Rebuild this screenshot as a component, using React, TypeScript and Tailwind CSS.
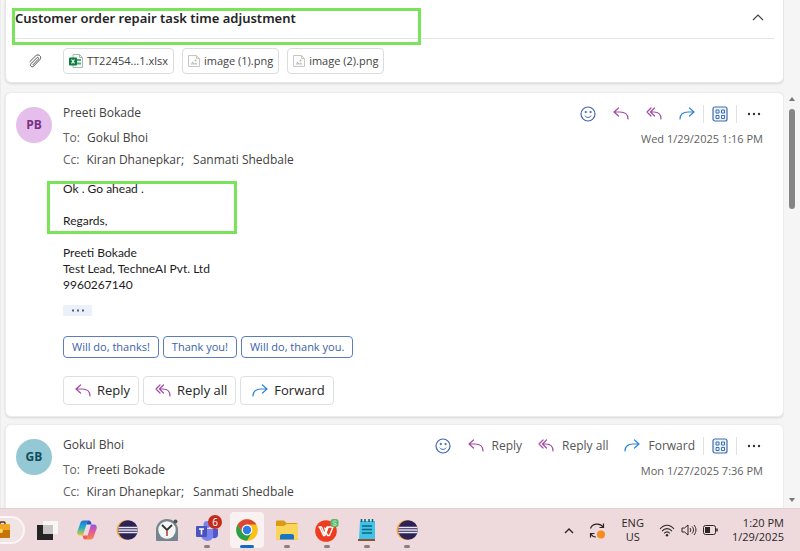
import type { ReactNode } from "react";
import clsx from "clsx";

const suggestions = ["Will do, thanks!", "Thank you!", "Will do, thank you."];

const purple = "#a24ba8";
const blue = "#2f86d6";

function ReplyIcon() {
  return (
    <svg width="16" height="14" viewBox="0 0 16 14" fill="none" stroke={purple} strokeWidth="1.200" strokeLinecap="round" strokeLinejoin="round" aria-hidden="true">
      <path d="M5.500 1 1 5l4.500 4M1.300 5H7c5 0 8 2.500 8 7" />
    </svg>
  );
}

function ReplyAllIcon() {
  return (
    <svg width="16" height="14" viewBox="0 0 16 14" fill="none" stroke={purple} strokeWidth="1.200" strokeLinecap="round" strokeLinejoin="round" aria-hidden="true">
      <path d="M5 1 1 5l4 4M8.500 1l-4 4 4 4M4.800 5H8c4.500 0 7 2.500 7 7" />
    </svg>
  );
}

function ForwardIcon() {
  return (
    <svg width="16" height="14" viewBox="0 0 16 14" fill="none" stroke={blue} strokeWidth="1.200" strokeLinecap="round" strokeLinejoin="round" aria-hidden="true">
      <path d="m10.500 1 4.500 4-4.500 4M14.700 5H9c-5 0-8 2.500-8 7" />
    </svg>
  );
}

function SmileIcon() {
  return (
    <svg width="16" height="16" viewBox="0 0 16 16" fill="none" stroke="#4466ad" strokeLinecap="round" aria-hidden="true">
      <circle cx="8" cy="8" r="7" strokeWidth="1.200" />
      <path d="M5 10c1.500 2 4.500 2 6 0" />
      <circle cx="5.600" cy="6" r=".6" fill="#4466ad" />
      <circle cx="10.400" cy="6" r=".6" fill="#4466ad" />
    </svg>
  );
}

function AppsIcon() {
  return (
    <svg width="16" height="16" viewBox="0 0 16 16" fill="none" stroke="#416fae" aria-hidden="true">
      <rect x="1" y="1" width="14" height="14" rx="2" fill="#edf3fb" strokeWidth="1.200" />
      <path d="M4 4h3v3H4zM9.500 4h3v3h-3zM4 9.500h3v3H4zM9.500 9.500h3v3h-3z" />
    </svg>
  );
}

function MoreIcon() {
  return (
    <svg width="14" height="4" viewBox="0 0 14 4" fill="#333" aria-hidden="true">
      <circle cx="2" cy="2" r="1.200" />
      <circle cx="7" cy="2" r="1.200" />
      <circle cx="12" cy="2" r="1.200" />
    </svg>
  );
}

function ExcelIcon() {
  return (
    <svg width="14" height="14" viewBox="0 0 14 14" aria-hidden="true">
      <path d="M4 .5h6.500l3 3v10H4z" fill="#f4faf6" stroke="#a9b8ae" />
      <path d="M8 5h4v2H8zM8 8.500h4v2H8z" fill="#4fae7b" />
      <path d="M10.500.5v3h3" fill="none" stroke="#a9b8ae" />
      <rect y="3.500" width="8" height="8" rx="1" fill="#107c41" />
      <path d="m2.500 5.500 3 4M5.500 5.500l-3 4" stroke="#fff" strokeWidth="1.200" />
    </svg>
  );
}

function ImageIcon() {
  return (
    <svg width="12" height="12" viewBox="0 0 12 12" fill="none" aria-hidden="true">
      <path d="M.5.5h8l3 3v8H.5z" fill="#fcfcfc" stroke="#c9c6c2" />
      <path d="M8.500.5v3h3" stroke="#c9c6c2" />
      <path d="m2.500 9.500 2-3 2 2 1.500-1 1.500 2z" fill="#b7c9dc" />
      <circle cx="7.500" cy="5.500" r="1" fill="#e9b25c" />
    </svg>
  );
}

const attachments = [
  { name: "TT22454...1.xlsx", icon: <ExcelIcon /> },
  { name: "image (1).png", icon: <ImageIcon /> },
  { name: "image (2).png", icon: <ImageIcon /> },
];

const replyActions = [
  { label: "Reply", icon: <ReplyIcon /> },
  { label: "Reply all", icon: <ReplyAllIcon /> },
  { label: "Forward", icon: <ForwardIcon /> },
];

type MessageProps = {
  from: string;
  to: string;
  initials: string;
  avatar: string;
  date: string;
  labelled?: boolean;
  children?: ReactNode;
};

function Message({ from, to, initials, avatar, date, labelled, children }: MessageProps) {
  return (
    <article className="rounded-md border border-[#ececec] bg-white pt-[9px] pr-5 pb-[11px] pl-[10px] shadow-sm">
      <div className="flex gap-[11px]">
        <div className={clsx("mt-[5px] flex size-9 shrink-0 items-center justify-center rounded-full text-[12px] font-bold", avatar)}>
          {initials}
        </div>
        <div className="min-w-0 flex-1">
          <div className="flex items-start justify-between">
            <div className="text-[12px] leading-[22px] text-[#424242]">
              <p>{from}</p>
              <p className="mt-[3px]">
                <span className="mr-[7px] text-[#616161]">To:</span>
                {to}
              </p>
              <p>
                <span className="mr-[7px] text-[#616161]">Cc:</span>
                Kiran Dhanepkar;<span className="ml-[9px]">Sanmati Shedbale</span>
              </p>
            </div>
            <div className="flex flex-col items-end">
              <div className="flex h-6 items-center">
                <button type="button" aria-label="React" className="mr-[17px]">
                  <SmileIcon />
                </button>
                <div className={clsx("mr-2 flex items-center", labelled ? "gap-4" : "gap-[17px]")}>
                  {replyActions.map((action) => (
                    <button key={action.label} type="button" aria-label={action.label} className="flex items-center gap-2 text-[12px] text-[#555]">
                      {action.icon}
                      {labelled && <span>{action.label}</span>}
                    </button>
                  ))}
                </div>
                <div className="flex h-[18px] items-center border-x border-[#e2e2e2] px-2">
                  <button type="button" aria-label="Apps">
                    <AppsIcon />
                  </button>
                </div>
                <button type="button" aria-label="More actions" className="flex h-4 items-center pr-[2px] pl-[10px]">
                  <MoreIcon />
                </button>
              </div>
              <time className="mt-[3px] text-[11px] leading-5 text-[#616161]">{date}</time>
            </div>
          </div>
          {children}
        </div>
      </div>
    </article>
  );
}

function EclipseLogo() {
  return (
    <svg width="22" height="22" viewBox="0 0 22 22">
      <circle cx="10.500" cy="11" r="10" fill="#f0a33e" />
      <circle cx="12" cy="11" r="9.800" fill="#2c2255" />
      <path d="M2.500 8.500h19M2.300 11h19.400M2.500 13.500h19" stroke="#e8e6f2" strokeWidth="1.300" />
    </svg>
  );
}

const apps: { name: string; icon: ReactNode; open?: boolean; active?: boolean; badge?: string }[] = [
  {
    name: "Task view",
    icon: (
      <svg width="22" height="22" viewBox="0 0 22 22">
        <path d="M1 6h16v15H1z" fill="#252525" />
        <path d="M7 2h15v13H7z" fill="#fbf8f8" opacity=".9" />
        <path d="M7 6h10v9H7z" fill="#c9c6c6" />
      </svg>
    ),
  },
  {
    name: "Copilot",
    icon: (
      <svg width="22" height="22" viewBox="0 0 22 22">
        <defs>
          <linearGradient id="cool" x1="0" y1="0" x2="0" y2="1">
            <stop stopColor="#1d75d8" />
            <stop offset=".5" stopColor="#27b1c2" />
            <stop offset="1" stopColor="#e9c62f" />
          </linearGradient>
          <linearGradient id="warm" x1="0" y1="0" x2="0" y2="1">
            <stop stopColor="#9357db" />
            <stop offset=".5" stopColor="#e65a9c" />
            <stop offset="1" stopColor="#f58a40" />
          </linearGradient>
        </defs>
        <path d="M13 1.500H7.500C5.500 1.500 4.600 3 4 5L1.500 12c-.8 2.500.2 4.500 2.500 4.500h3L10.500 5c.5-2 1-3 2.500-3.500z" fill="url(#cool)" />
        <path d="M9 20.500h5.500c2 0 3-1.500 3.500-3.500l2.500-7c.8-2.500-.2-4.500-2.500-4.500h-3L11.500 17c-.5 2-1 3-2.500 3.500z" fill="url(#warm)" />
        <path d="M12.500 1.500c2 0 2.500 1 3 4h-5c.4-2.500.9-3.500 2-4z" fill="#2753c5" />
        <path d="M9.500 20.500c-2 0-2.500-1.200-2.800-4h5c-.3 2.200-1 3.500-2.200 4z" fill="#f05d58" />
      </svg>
    ),
  },
  { name: "Eclipse", icon: <EclipseLogo /> },
  {
    name: "Clock",
    icon: (
      <svg width="22" height="22" viewBox="0 0 22 22">
        <path d="M0 11v10q0 1 1 1h20q1 0 1-1V11z" fill="#75858d" />
        <circle cx="11" cy="11" r="11" fill="#75858d" />
        <circle cx="19.500" cy="2.500" r="2" fill="#4b555b" />
        <circle cx="11" cy="11" r="8.700" fill="#f4f6f7" />
        <path d="m6 6 5 5 5-5" fill="none" stroke="#333" strokeWidth="1.800" />
        <path d="M11 11v6" stroke="#b5482b" strokeWidth="1.600" />
      </svg>
    ),
  },
  {
    name: "Teams",
    open: true,
    badge: "6",
    icon: (
      <svg width="22" height="22" viewBox="0 0 22 22">
        <circle cx="11" cy="5.500" r="3.500" fill="#7b83eb" />
        <circle cx="18" cy="6" r="2.500" fill="#5059c9" />
        <path d="M14 10h8v6c0 3-4 4.500-7 2z" fill="#5059c9" />
        <path d="M5 10h12v7c0 6-10 7-12 0z" fill="#7b83eb" />
        <rect y="7" width="11" height="11" rx="1" fill="#4b53bc" />
        <path d="M3 10h5M5.500 10v5.500" stroke="#fff" strokeWidth="1.500" />
      </svg>
    ),
  },
  {
    name: "Chrome",
    open: true,
    active: true,
    icon: (
      <svg width="22" height="22" viewBox="0 0 22 22">
        <circle cx="11" cy="11" r="10.800" fill="#fbc116" />
        <path d="M1.650 5.600A10.800 10.800 0 0 1 20.350 5.600H11L6.320 13.700z" fill="#dd4536" />
        <path d="M1.650 5.600A10.800 10.800 0 0 0 11 21.800L15.680 13.700H6.320z" fill="#2aa04a" />
        <circle cx="11" cy="11" r="5.400" fill="#fff" />
        <circle cx="11" cy="11" r="4.200" fill="#2f7de1" />
      </svg>
    ),
  },
  {
    name: "File Explorer",
    open: true,
    icon: (
      <svg width="22" height="22" viewBox="0 0 22 22">
        <path d="M0 3c0-1 .5-1.500 1.500-1.500H8L10.500 4H20c1 0 2 .7 2 2v13c0 1-.7 1.500-1.500 1.500h-19C.5 20.500 0 20 0 19z" fill="#d99a16" />
        <path d="M0 7h8l2.500-2H22v14c0 1-.7 1.500-1.500 1.500h-19C.5 20.500 0 20 0 19z" fill="#fbd45c" />
        <path d="M4 20.500V17c0-1 .7-2 2-2h10c1.300 0 2 1 2 2v3.500z" fill="#1976c5" />
      </svg>
    ),
  },
  {
    name: "WPS Office",
    open: true,
    icon: (
      <svg width="24" height="24" viewBox="0 0 24 24">
        <circle cx="11" cy="13" r="10.800" fill="#ed3c20" />
        <path d="M3.500 9h3l3 7 2.500-7h6l-3.500 8.500h-2L9.500 9.500M4.500 9l4 8.500h1.500L13 9.500" fill="none" stroke="#fff" strokeWidth="1.400" strokeLinejoin="round" />
        <rect x="15.500" y="1" width="8" height="8" rx="2.500" fill="#58b868" />
        <path d="M21.500 3.500c-1.500-1-3.500-.5-3.500.8 0 1.400 3.500.6 3.500 2 0 1-2.200 1.400-3.700.4" fill="none" stroke="#c3ecca" />
      </svg>
    ),
  },
  {
    name: "Notepad",
    open: true,
    icon: (
      <svg width="20" height="22" viewBox="0 0 20 22">
        <path d="M3 2h15v18H2z" fill="#3fc3e6" />
        <path d="M1 20h17v2H1z" fill="#8c5137" />
        <path d="M4.500 0v3M8 0v3M12 0v3M15.500 0v3" stroke="#155a70" strokeWidth="1.500" />
        <path d="M5 7h10M5 10.500h10M5 14h10" stroke="#12667f" strokeWidth="1.500" />
      </svg>
    ),
  },
  { name: "Eclipse workspace", open: true, icon: <EclipseLogo /> },
];

function Taskbar() {
  return (
    <footer className="flex h-[43px] shrink-0 items-center justify-between border-t border-[#e6cfd2] bg-[#eed9dc] pr-4 text-[#2b2728]">
      <nav aria-label="Taskbar" className="flex h-full items-center">
        <button type="button" aria-label="Wallet" className="mr-[2px] flex h-7 w-[25px] items-center rounded-r-full border-2 border-l-0 border-[#fbf5f5] bg-[#f0e4e5]">
          <svg width="10" height="18" viewBox="0 0 10 18">
            <path d="M0 3.500V2q0-1 1-1h3q1 0 1 1v1.500" fill="none" stroke="#59360c" strokeWidth="1.400" />
            <path d="M-4 3H9q1 0 1 1v12q0 1-1 1H-4z" fill="#f0a824" />
            <path d="M0 9h10v7q0 1-1 1H0z" fill="#c57508" />
            <circle cx="1" cy="10" r="2" fill="#ffd65e" />
          </svg>
        </button>
        {apps.map((app) => (
          <button key={app.name} type="button" aria-label={app.name} className="flex h-full w-10 items-center justify-center">
            <span className={clsx("relative flex h-9 w-[34px] items-center justify-center rounded", app.active && "bg-[#faf1f2]")}>
              {app.icon}
              {app.badge && (
                <span className="absolute top-[3px] right-[2px] flex size-[14px] items-center justify-center rounded-full bg-[#c42b1c] text-[10px] leading-none text-white">
                  {app.badge}
                </span>
              )}
              {app.open && (
                <span className={clsx("absolute bottom-0 h-[3px] rounded-full", app.active ? "w-[14px] bg-[#1669c5]" : "w-[6px] bg-[#8a7f81]")} />
              )}
            </span>
          </button>
        ))}
      </nav>
      <div className="flex items-center text-[11px] leading-[14px]">
        <button type="button" aria-label="Show hidden icons" className="mr-[15px]">
          <svg width="10" height="7" viewBox="0 0 10 7" fill="none" stroke="#2b2728" strokeWidth="1.400">
            <path d="m1 6 4-4 4 4" />
          </svg>
        </button>
        <button type="button" aria-label="Updates" className="mr-[15px]">
          <svg width="17" height="17" viewBox="0 0 17 17" fill="none" stroke="#2b2728" strokeWidth="1.200">
            <path d="M1.500 6.500C3 1.500 11 .5 14 5M14.500 1.500V5.500h-4M1.500 15.500v-4h4M2 12c1 2 3 3 5 3" />
            <circle cx="12" cy="12.500" r="4" fill="#f68b1f" stroke="none" />
          </svg>
        </button>
        <button type="button" className="mr-[15px] text-center">
          ENG
          <br />
          US
        </button>
        <button type="button" aria-label="Network, volume and battery" className="mr-[14px] flex items-center gap-[6px]">
          <svg width="16" height="13" viewBox="0 0 16 13" fill="none" stroke="#2b2728" strokeWidth="1.100">
            <path d="M1 5c4-5 10-5 14 0M3 7.200c3-3.500 7-3.500 10 0M5.200 9.300c1.700-1.900 3.900-1.900 5.600 0" />
            <circle cx="8" cy="11.200" r="1.200" fill="#2b2728" stroke="none" />
          </svg>
          <svg width="16" height="14" viewBox="0 0 16 14" fill="none" stroke="#2b2728" strokeLinejoin="round">
            <path d="M1 5h2.500L7 2v10L3.500 9H1zM9 5c1 1 1 3 0 4M11 3.500c2 2 2 5 0 7M13 2c2.600 3 2.600 7 0 10" />
          </svg>
          <svg width="15" height="10" viewBox="0 0 15 10" fill="none" stroke="#2b2728">
            <rect x=".5" y=".5" width="12" height="9" rx="2" />
            <path d="M2 2h5v6H2z" fill="#2b2728" stroke="none" />
            <path d="M14 3.500v3" strokeWidth="1.500" />
          </svg>
        </button>
        <button type="button" className="text-right">
          1:20 PM
          <br />
          1/29/2025
        </button>
      </div>
    </footer>
  );
}

export default function App() {
  return (
    <div className="flex h-screen flex-col overflow-hidden bg-[#f5f5f5] font-['Open_Sans','Noto_Sans',sans-serif]">
      <div className="flex min-h-0 flex-1">
        <main className="relative min-w-0 flex-1 overflow-hidden border-l border-[#ececec] pl-1">
          <header className="mb-[9px] rounded-b-md border border-t-0 border-[#e6e6e6] bg-white px-[9px] pb-2 shadow">
            <div className="flex h-[39px] items-center justify-between border-b border-[#e5e5e5] pr-[10px]">
              <h1 className="font-['Noto_Sans','Open_Sans',sans-serif] text-[13px] font-semibold text-[#242424]">Customer order repair task time adjustment</h1>
              <button type="button" aria-label="Collapse" className="pb-1">
                <svg width="12" height="8" viewBox="0 0 12 8" fill="none" stroke="#444" strokeWidth="1.200">
                  <path d="m1 7 5-5 5 5" />
                </svg>
              </button>
            </div>
            <div className="mt-[9px] flex items-center gap-2">
              <div className="flex w-10 justify-center">
                <svg width="14" height="16" viewBox="0 0 14 16" fill="none" stroke="#555" strokeLinecap="round" aria-hidden="true">
                  <path d="M2 8.500 7.500 3c3-3 7 .7 4.300 3.700l-6 6.300c-2 2-4.500-.4-2.700-2.400l5.700-5.800c1-1 2.500.3 1.500 1.400L5 11.700" />
                </svg>
              </div>
              {attachments.map((file) => (
                <button key={file.name} type="button" className="flex h-[26px] items-center gap-1 rounded border border-[#dcdcdc] px-[5px] text-[11px] text-[#424242]">
                  {file.icon}
                  {file.name}
                </button>
              ))}
            </div>
          </header>

          <Message from="Preeti Bokade" to="Gokul Bhoi" initials="PB" avatar="bg-[#e5beec] text-[#7a3085]" date="Wed 1/29/2025 1:16 PM">
            <div className="mt-[10px] font-[Lato,'Open_Sans',sans-serif] text-[12px] leading-4 text-[#1c1c1c]">
              <p>Ok . Go ahead .</p>
              <p className="mt-4">Regards,</p>
              <p className="mt-4">Preeti Bokade</p>
              <p>Test Lead, TechneAI Pvt. Ltd</p>
              <p>9960267140</p>
            </div>
            <button type="button" aria-label="Show trimmed content" className="mt-3 flex h-[11px] w-[29px] items-center justify-center bg-[#ebf0f9]">
              <svg width="14" height="3" viewBox="0 0 14 3" fill="#50618a">
                <path d="M1 .5h2v2H1zM6 .5h2v2H6zM11 .5h2v2h-2z" />
              </svg>
            </button>
            <div className="mt-5 flex gap-1">
              {suggestions.map((text) => (
                <button key={text} type="button" className="h-[22px] rounded border border-[#5c7dbd] px-2 text-[11px] text-[#3a62a8]">
                  {text}
                </button>
              ))}
            </div>
            <div className="mt-[18px] flex gap-1">
              {replyActions.map((action) => (
                <button key={action.label} type="button" className="flex h-[29px] items-center gap-[6px] rounded border border-[#e0e0e0] pr-2 pl-[11px] text-[13px] text-[#242424]">
                  {action.icon}
                  {action.label}
                </button>
              ))}
            </div>
          </Message>

          <div className="mt-[7px]">
            <Message from="Gokul Bhoi" to="Preeti Bokade" initials="GB" avatar="bg-[#94c8d4] text-[#0f4c5c]" date="Mon 1/27/2025 7:36 PM" labelled />
          </div>

          <div className="absolute top-2 left-[11px] h-[37px] w-[409px] border-[3px] border-[#7be35a]" />
          <div className="absolute top-[181px] left-[46px] h-[53px] w-[190px] border-[3px] border-[#7be35a]" />
        </main>
        <div className="flex w-4 flex-col items-center pt-[97px] pb-[6px]">
          <svg width="6" height="4" viewBox="0 0 6 4" fill="#777">
            <path d="M0 4 3 0l3 4z" />
          </svg>
          <div className="mt-2 h-[100px] w-[6px] rounded-full bg-[#858585]" />
          <svg className="mt-auto" width="6" height="4" viewBox="0 0 6 4" fill="#777">
            <path d="m0 0 3 4 3-4z" />
          </svg>
        </div>
      </div>
      <Taskbar />
    </div>
  );
}
